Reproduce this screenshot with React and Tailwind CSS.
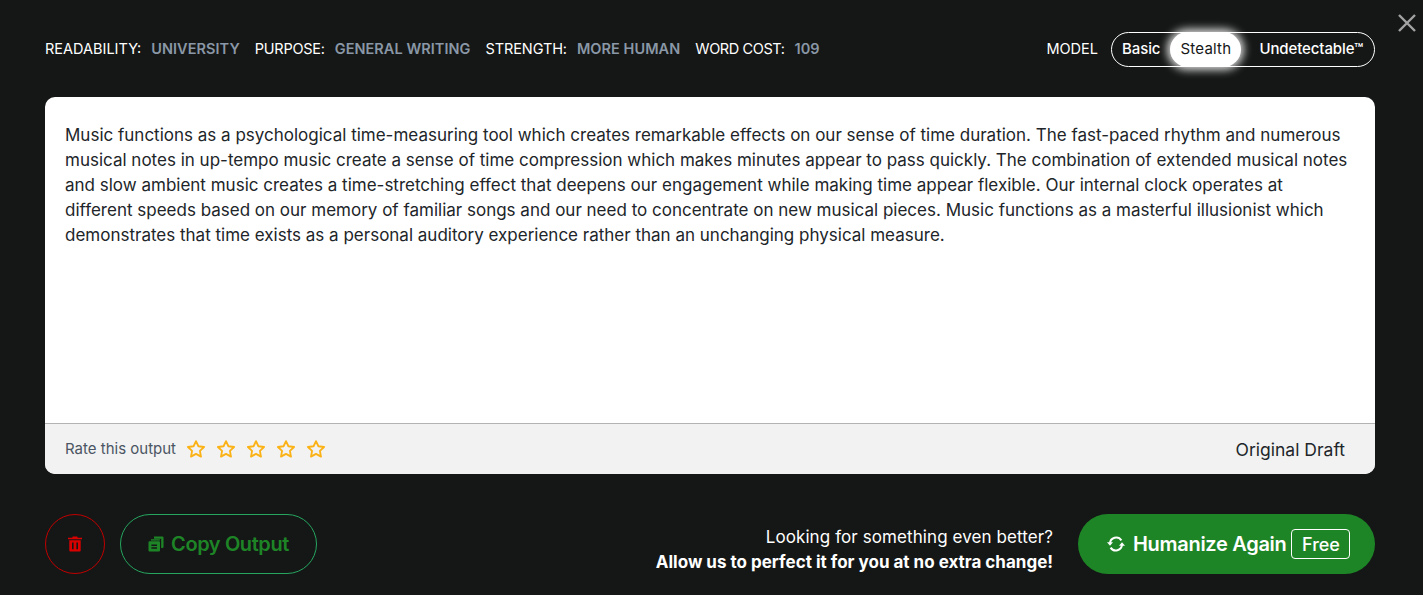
import React from "react";

const font = { fontFamily: '"Inter", "Liberation Sans", sans-serif' };

function Meta({ label, value, labelClass }) {
  return (
    <div className="flex items-center gap-[10px] pb-[1px]">
      <span className={`text-white text-[14.5px] ${labelClass}`}>{label}</span>
      <span className="text-[#8a97a6] text-[14.5px] font-semibold tracking-[0.05px]">{value}</span>
    </div>
  );
}

function Star() {
  return (
    <svg width="20" height="20" viewBox="0 0 24 24" fill="none" stroke="#fbb216" strokeWidth="2.2" strokeLinejoin="round">
      <path d="M12 2.5l2.9 6.2 6.8.9-5 4.7 1.3 6.8-6-3.3-6 3.3 1.3-6.8-5-4.7 6.8-.9z" />
    </svg>
  );
}

function CopyIcon() {
  return (
    <svg width="16" height="16" viewBox="0 0 16 16" fill="#1e8527">
      <path d="M6 0.5h8.5a1 1 0 0 1 1 1V11a1 1 0 0 1-1 1h-1.3V2.8H6z" />
      <path d="M3 3.2h8.8V4.6H3z" />
      <path
        fillRule="evenodd"
        d="M1.5 5.2h9.5a1 1 0 0 1 1 1v8.3a1 1 0 0 1-1 1H1.5a1 1 0 0 1-1-1V6.2a1 1 0 0 1 1-1z M3.4 8.4v1.5h5.6V8.4z M3.4 11.2v1.5h5.6v-1.5z"
      />
    </svg>
  );
}

function TrashIcon() {
  return (
    <svg width="14" height="16" viewBox="0 0 14 16" fill="#d90000">
      <path d="M4.8 0.5h4.4l.6 1.3H14v1.5H0V1.8h4.2z" />
      <path fillRule="evenodd" d="M1.3 4.3h11.4v10.2a1 1 0 0 1-1 1H2.3a1 1 0 0 1-1-1z M4 6.5v6.8h1.6V6.5z M8.4 6.5v6.8H10V6.5z" />
    </svg>
  );
}

function SyncIcon() {
  return (
    <svg width="18" height="16" viewBox="0 0 18 16" fill="none" stroke="#ffffff" strokeWidth="2" className="mr-[8px] shrink-0">
      <path d="M3 7.5A6.2 6.2 0 0 1 14.4 4.4" />
      <path d="M15 8.5A6.2 6.2 0 0 1 3.6 11.6" />
      <path d="M0 6.2h6L3 9.8z" fill="#ffffff" stroke="none" />
      <path d="M12 9.8h6l-3-3.6z" fill="#ffffff" stroke="none" />
    </svg>
  );
}

export default function App() {
  return (
    <div style={font} className="relative h-[595px] w-full overflow-hidden bg-[#151716] pl-[45px] pr-[48px] pt-[32px]">
      <button className="absolute right-[6px] top-[13px] text-[#a3a3a3]">
        <svg width="20" height="20" viewBox="0 0 20 20" stroke="currentColor" strokeWidth="2.4" fill="none">
          <path d="M2 2l16 16M18 2L2 18" />
        </svg>
      </button>

      <header className="flex h-[35px] items-center justify-between">
        <div className="flex items-center gap-[15px]">
          <Meta label="READABILITY:" value="UNIVERSITY" labelClass="tracking-[0px]" />
          <Meta label="PURPOSE:" value="GENERAL WRITING" labelClass="tracking-[-0.25px]" />
          <Meta label="STRENGTH:" value="MORE HUMAN" labelClass="tracking-[-0.1px]" />
          <Meta label="WORD COST:" value="109" labelClass="tracking-[-0.4px]" />
        </div>
        <div className="flex items-center gap-[13px]">
          <span className="pb-[1px] text-white text-[14.5px]">MODEL</span>
          <div className="flex h-[35px] w-[264px] items-center rounded-full border border-white pl-[10px] text-[15px] font-medium text-white tracking-[-0.1px]">
            <span className="pb-[1px]">Basic</span>
            <span className="ml-[10px] flex h-[35px] w-[71px] items-center justify-center rounded-full bg-white pb-[1px] font-normal tracking-[0.2px] text-[#151718] shadow-[0_0_8px_3px_rgba(255,255,255,0.85)]">Stealth</span>
            <span className="ml-[18px] pb-[1px]">Undetectable™</span>
          </div>
        </div>
      </header>

      <main className="mt-[30px] flex h-[377px] flex-col overflow-hidden rounded-[10px] bg-white">
        <div className="flex-1 px-[20px] pt-[26px] text-[17px] leading-[25px] text-[#212529]">
          Music functions as a psychological time-measuring tool which creates remarkable effects on our sense of time duration. The fast-paced rhythm and numerous musical notes in up-tempo music create a sense of time compression which makes minutes appear to pass quickly. The combination of extended musical notes and slow ambient music creates a time-stretching effect that deepens our engagement while making time appear flexible. Our internal clock operates at different speeds based on our memory of familiar songs and our need to concentrate on new musical pieces. Music functions as a masterful illusionist which demonstrates that time exists as a personal auditory experience rather than an unchanging physical measure.
        </div>
        <div className="flex h-[51px] items-center justify-between border-t border-[#b3b3b3] bg-[#f2f2f2] pl-[20px] pr-[30px]">
          <div className="flex items-center">
            <span className="mr-[10px] text-[15px] text-[#4b5563]">Rate this output</span>
            <div className="flex items-center gap-[10px]">
              <Star /><Star /><Star /><Star /><Star />
            </div>
          </div>
          <span className="pt-[2px] text-[17.5px] text-[#212529]">Original Draft</span>
        </div>
      </main>

      <footer className="mt-[40px] flex h-[60px] items-center justify-between">
        <div className="flex items-center gap-[15px]">
          <button className="flex h-[60px] w-[60px] items-center justify-center rounded-full border border-[#c00000]">
            <TrashIcon />
          </button>
          <button className="flex h-[60px] w-[197px] items-center justify-center gap-[7px] rounded-full border border-[#25a55f] text-[20px] font-semibold text-[#1e8527] tracking-[-0.4px]">
            <CopyIcon />
            Copy Output
          </button>
        </div>
        <div className="flex h-[60px] items-center gap-[25px]">
          <div className="mt-[12px] text-right text-[17px] leading-[25px] text-white">
            <div className="tracking-[0.09px]">Looking for something even better?</div>
            <div className="font-bold">Allow us to perfect it for you at no extra change!</div>
          </div>
          <button className="flex h-[60px] w-[297px] items-center rounded-full bg-[#1e8527] pl-[29px] text-[20px] font-semibold text-white tracking-[-0.3px]">
            <SyncIcon />
            Humanize Again
            <span className="ml-[5px] flex h-[30px] w-[59px] items-center justify-center rounded-[4px] border border-white pt-[1px] text-[18px] font-medium tracking-[0px]">Free</span>
          </button>
        </div>
      </footer>
    </div>
  );
}
